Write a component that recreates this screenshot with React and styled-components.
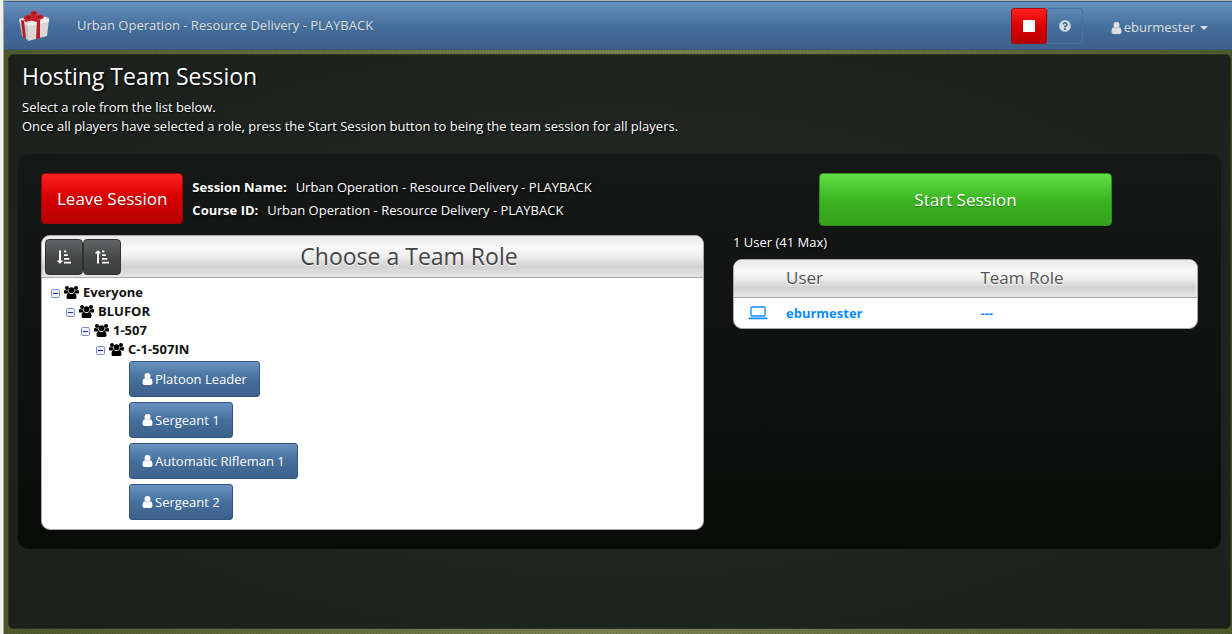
import React from "react";
import styled, { createGlobalStyle, css } from "styled-components";
import { FaQuestionCircle } from "react-icons/fa";

const GlobalStyle = createGlobalStyle`
  *, *::before, *::after {
    box-sizing: border-box;
  }

  html, body, #root {
    height: 100%;
    margin: 0;
  }

  body {
    background: #f1f1f1;
    color: #ffffff;
    font-family: "Open Sans", "Noto Sans", sans-serif;
    font-size: 13px;
    font-weight: 500;
    line-height: 19px;
  }

  button {
    font-family: inherit;
    font-weight: inherit;
    cursor: pointer;
  }
`;

const blueGradient = "linear-gradient(#6892c1 0%, #456f9c 50%, #3e618c 100%)";
const silverGradient =
  "linear-gradient(#e9e9e9 0%, #f9f9f9 30%, #eeeeee 50%, #d2d2d2 75%, #e6e6e6 100%)";

const Page = styled.div`
  display: flex;
  flex-direction: column;
  min-height: 100vh;
`;

const Window = styled.div`
  flex: 1;
  display: flex;
  flex-direction: column;
  margin-left: 3px;
  border-top: 1px solid #b5b5ad;
  border-left: 1px solid #a8a8a0;
  background: repeating-linear-gradient(
      90deg,
      rgba(0, 0, 0, 0.08) 0 1px,
      transparent 1px 3px
    ),
    linear-gradient(90deg, #50592a 0%, #7b8351 50%, #50592a 100%);
`;

const Header = styled.header`
  display: flex;
  align-items: center;
  height: 49px;
  padding: 0 24px 0 14px;
  border-top: 1px solid #36618f;
  border-bottom: 1px solid #365680;
  background: ${blueGradient};
  color: #dddddd;
  text-shadow: 0 1px 1px #3e6790;
`;

const HeaderTitle = styled.div`
  flex: 1;
  margin-left: 27px;
`;

const HeaderButton = styled.button`
  display: flex;
  align-items: center;
  justify-content: center;
  width: 36px;
  height: 36px;
  padding: 0;
  border: 1px solid #4872a0;
  border-radius: 3px;
  background: transparent;
  color: #d5dbe2;

  ${(props) =>
    props.$danger &&
    css`
      border-color: #a80808;
      background: linear-gradient(#ff2020 0%, #d90000 50%, #b80000 100%);
    `}
`;

const StopSquare = styled.span`
  width: 12px;
  height: 12px;
  background: #ffffff;
`;

const UserMenu = styled.button`
  display: flex;
  align-items: center;
  gap: 2px;
  margin-left: 28px;
  padding: 4px 0 0;
  border: none;
  background: none;
  color: #dddddd;
  font-size: 13px;
  line-height: 19px;
`;

const Caret = styled.span`
  margin-left: 3px;
  border: 4px solid transparent;
  border-top-color: #dddddd;
  border-bottom: none;
`;

const Main = styled.main`
  flex: 1;
  margin: 4px 1px 5px 4px;
  padding: 8px 9px 79px;
  border: 1px solid #2f3320;
  border-radius: 5px;
  background: radial-gradient(ellipse at 50% 50%, #252a26 0%, #1b201d 100%);
  text-shadow: 1px 1px 2px #000000;
`;

const Heading = styled.h1`
  margin: 0 0 8px;
  padding-left: 4px;
  font-size: 23px;
  font-weight: 400;
  line-height: 27px;
`;

const Intro = styled.p`
  margin: 0;
  padding-left: 4px;
`;

const Panel = styled.section`
  display: flex;
  gap: 29px;
  margin-top: 18px;
  padding: 19px 23px;
  border-radius: 10px;
  background: linear-gradient(#151816 0%, #0a0c0a 100%);
`;

const RoleColumn = styled.div`
  flex: 663;
  min-width: 0;
`;

const UserColumn = styled.div`
  flex: 465;
  min-width: 0;
`;

const SessionBar = styled.div`
  display: flex;
  gap: 9px;
  margin-bottom: 11px;
`;

const ActionButton = styled.button`
  display: block;
  height: 51px;
  padding: 0 15px;
  border: 1px solid #a00606;
  border-radius: 4px;
  background: linear-gradient(#ff2020 0%, #d40000 50%, #b60000 100%);
  color: #ffffff;
  font-size: 17px;
  font-weight: 400;
  text-shadow: 0 1px 1px rgba(0, 0, 0, 0.3);
  white-space: nowrap;
`;

const StartButton = styled(ActionButton)`
  width: 63%;
  height: 53px;
  margin: 0 auto 7px;
  border-color: #2f8f1b;
  background: linear-gradient(#62de46 0%, #3cb521 50%, #36a01e 100%);
`;

const Details = styled.dl`
  margin: 3px 0 0;
`;

const Detail = styled.div`
  display: flex;
  gap: 9px;
  line-height: 23px;

  dt {
    font-weight: 700;
  }

  dd {
    margin: 0;
  }
`;

const Card = styled.div`
  overflow: hidden;
  border: 1px solid #aaaaaa;
  border-radius: 9px;
  background: #ffffff;
  color: #222222;
  text-shadow: none;
`;

const RoleHeader = styled.div`
  display: flex;
  align-items: center;
  height: 42px;
  padding: 0 3px;
  border-bottom: 1px solid #aaaaaa;
  background: ${silverGradient};
`;

const RoleTitle = styled.h2`
  flex: 1;
  margin: 0;
  padding-right: 3px;
  color: #444444;
  font-size: 23px;
  font-weight: 400;
  text-align: center;
  text-shadow: 0 1px 0 #ffffff;
`;

const SortButton = styled.button`
  display: flex;
  align-items: center;
  justify-content: center;
  width: 38px;
  height: 36px;
  padding: 0;
  border: 1px solid #303232;
  border-radius: 4px;
  background: linear-gradient(#626666 0%, #474949 50%, #3c3e3e 100%);
  color: #ffffff;
`;

const Tree = styled.ul`
  margin: 0;
  padding: 5px 0 4px 9px;
  list-style: none;
`;

const Branch = styled.ul`
  margin: 0;
  padding: 0 0 0 15px;
  list-style: none;
`;

const NodeLabel = styled.div`
  display: flex;
  align-items: center;
  gap: 4px;
  color: #111111;
  font-weight: 700;
  line-height: 19px;
`;

const Toggle = styled.button`
  display: flex;
  padding: 2px 0 0;
  border: none;
  background: none;
`;

const RoleList = styled.ul`
  display: flex;
  flex-direction: column;
  align-items: flex-start;
  gap: 5px;
  margin: 2px 0 5px;
  padding: 0 0 0 33px;
  list-style: none;
`;

const RoleButton = styled.button`
  display: flex;
  align-items: center;
  gap: 2px;
  height: 36px;
  padding: 0 12px;
  border: 1px solid #34577f;
  border-radius: 3px;
  background: ${blueGradient};
  color: #ffffff;
  font-size: 13px;
`;

const UserCount = styled.div`
  margin-bottom: 7px;
`;

const UserTable = styled.table`
  width: 100%;
  border-collapse: collapse;
  table-layout: fixed;

  th {
    height: 37px;
    padding: 0 0 1px;
    border-bottom: 1px solid #aaaaaa;
    color: #555555;
    font-size: 17px;
    font-weight: 400;
    text-align: left;
    text-shadow: 0 1px 0 #ffffff;
  }

  td {
    height: 31px;
    padding: 1px 0 0;
    color: #0a8cff;
    font-weight: 700;
  }

  thead {
    background: ${silverGradient};
  }

  td svg {
    display: block;
    margin-left: 14px;
  }
`;

const IconColumn = styled.col`
  width: 52px;
`;

const NameColumn = styled.col`
  width: 42%;
`;

const PageFooter = styled.footer`
  display: flex;
  height: 2px;
  border-top: 1px solid #c9c9c6;
  background: #f1f1f1;
`;

function GiftLogo() {
  return (
    <svg width="32" height="32" viewBox="0 0 32 32" aria-label="Gift">
      <path d="M1 9 11 13 11 31 4 26Z" fill="#c3c1bf" />
      <path d="M10 12 31 9 29 26 10 31Z" fill="#dad8d7" />
      <path d="M1 9 17 4 31 8 10 13Z" fill="#efeeee" />
      <path d="M1 9 10 12 10 16 2 13Z" fill="#dddbd9" />
      <path d="M10 12 31 8 31 12 10 16Z" fill="#eeeded" />
      <path d="M3 10 6 11 8 29 5 27Z" fill="#b71c22" />
      <path d="M19 11 22 10 22 28 18 29Z" fill="#b71c22" />
      <path d="M5 10 21 5 25 7 8 12Z" fill="#c92027" />
      <path d="M9 6 23 10 19 12 4 8Z" fill="#bc1b22" />
      <path
        d="M15 9C11 10 6 10 6 8 6 5 11 4 14 5 11 3 13 1 16 1 20 1 20 3 18 5 21 4 26 5 26 7 25 10 19 10 15 9Z"
        fill="#cb2028"
      />
      <path d="M8 7 13 6 11 9Z M18 7 23 6 22 8Z" fill="#82151b" />
      <path d="M14 3 18 2 16 5Z" fill="#94171e" />
    </svg>
  );
}

function SortIcon({ up }) {
  return (
    <svg width="14" height="14" viewBox="0 0 14 14" fill="currentColor" aria-hidden="true">
      {up ? (
        <path d="M2 13.500V3.500H.3L0 3 2.900.2 6 3 5.700 3.500H4V13.500Z" />
      ) : (
        <path d="M2 .5V10.500H.3L0 11 2.900 13.800 6 11 5.700 10.500H4V.5Z" />
      )}
      <path d="M7 .5H9.300V2.300H7Z M7 4.200H10.800V6H7Z M7 8H12.300V9.800H7Z M7 11.700H14V13.500H7Z" />
    </svg>
  );
}

function GroupIcon() {
  return (
    <svg width="15" height="13" viewBox="0 0 15 13" fill="#000000" aria-hidden="true">
      <circle cx="3" cy="2" r="2" />
      <circle cx="12" cy="2" r="2" />
      <circle cx="7.5" cy="4.2" r="2.9" />
      <path d="M0 7V5.500C0 4 1 3.800 1.500 4 2.500 4.500 3 4.500 4 4.200 4 5.500 4.400 6 5 6.700 4 6.700 3.400 7 3 7.500H1C.4 7.500 0 7.400 0 7Z" />
      <path d="M15 7V5.500C15 4 14 3.800 13.500 4 12.500 4.500 12 4.500 11 4.200 11 5.500 10.600 6 10 6.700 11 6.700 11.600 7 12 7.500H14C14.600 7.500 15 7.400 15 7Z" />
      <path d="M2.500 11.200C2.500 8.500 3.300 7 5 7 6.700 8.300 8.300 8.300 10 7 11.700 7 12.500 8.500 12.500 11.200 12.500 12.400 11.700 13 10.700 13H4.300C3.300 13 2.500 12.400 2.500 11.200Z" />
    </svg>
  );
}

function PersonIcon() {
  return (
    <svg width="11" height="12" viewBox="0 0 11 12" fill="currentColor" aria-hidden="true">
      <circle cx="5.500" cy="3" r="3" />
      <path d="M.5 9.600C.5 7 1.300 5.300 3 5.300 4.600 6.500 6.400 6.500 8 5.300 9.700 5.300 10.500 7 10.500 9.600 10.500 11.200 9.700 12 8.600 12H2.400C1.300 12 .5 11.200.5 9.600Z" />
    </svg>
  );
}

function MinusIcon() {
  return (
    <svg width="9" height="9" viewBox="0 0 9 9" aria-hidden="true">
      <rect x=".5" y=".5" width="8" height="8" rx="1" fill="#eef1fb" stroke="#7b8fce" />
      <path d="M2 4.500H7" stroke="#2323c8" />
    </svg>
  );
}

function LaptopIcon() {
  return (
    <svg width="20" height="14" viewBox="0 0 20 14" fill="none" aria-hidden="true">
      <rect x="3" y="1" width="14" height="9" rx="1" stroke="#0a8cff" strokeWidth="1.300" />
      <path d="M.5 11.500H19.500V12.300C19.500 13 19 13.300 18 13.300H2C1 13.300.5 13 .5 12.300Z" fill="#0a8cff" />
    </svg>
  );
}

const groups = ["Everyone", "BLUFOR", "1-507", "C-1-507IN"];
const roles = ["Platoon Leader", "Sergeant 1", "Automatic Rifleman 1", "Sergeant 2"];

function TreeNode({ depth }) {
  const isLast = depth === groups.length - 1;

  return (
    <li>
      <NodeLabel>
        <Toggle aria-label={`Collapse ${groups[depth]}`}>
          <MinusIcon />
        </Toggle>
        <GroupIcon />
        {groups[depth]}
      </NodeLabel>
      {isLast ? (
        <RoleList>
          {roles.map((role) => (
            <li key={role}>
              <RoleButton>
                <PersonIcon />
                {role}
              </RoleButton>
            </li>
          ))}
        </RoleList>
      ) : (
        <Branch>
          <TreeNode depth={depth + 1} />
        </Branch>
      )}
    </li>
  );
}

function App() {
  const sessionName = "Urban Operation - Resource Delivery - PLAYBACK";

  return (
    <Page>
      <GlobalStyle />
      <Window>
        <Header>
          <GiftLogo />
          <HeaderTitle>{sessionName}</HeaderTitle>
          <HeaderButton $danger aria-label="Stop">
            <StopSquare />
          </HeaderButton>
          <HeaderButton aria-label="Help">
            <FaQuestionCircle size={12} />
          </HeaderButton>
          <UserMenu>
            <PersonIcon />
            eburmester
            <Caret />
          </UserMenu>
        </Header>

        <Main>
          <Heading>Hosting Team Session</Heading>
          <Intro>Select a role from the list below.</Intro>
          <Intro>
            Once all players have selected a role, press the Start Session button
            to being the team session for all players.
          </Intro>

          <Panel>
            <RoleColumn>
              <SessionBar>
                <ActionButton>Leave Session</ActionButton>
                <Details>
                  <Detail>
                    <dt>Session Name:</dt>
                    <dd>{sessionName}</dd>
                  </Detail>
                  <Detail>
                    <dt>Course ID:</dt>
                    <dd>{sessionName}</dd>
                  </Detail>
                </Details>
              </SessionBar>

              <Card>
                <RoleHeader>
                  <SortButton aria-label="Sort descending">
                    <SortIcon />
                  </SortButton>
                  <SortButton aria-label="Sort ascending">
                    <SortIcon up />
                  </SortButton>
                  <RoleTitle>Choose a Team Role</RoleTitle>
                </RoleHeader>
                <Tree>
                  <TreeNode depth={0} />
                </Tree>
              </Card>
            </RoleColumn>

            <UserColumn>
              <StartButton>Start Session</StartButton>
              <UserCount>1 User (41 Max)</UserCount>
              <Card>
                <UserTable>
                  <colgroup>
                    <IconColumn />
                    <NameColumn />
                    <col />
                  </colgroup>
                  <thead>
                    <tr>
                      <th aria-label="Status" />
                      <th>User</th>
                      <th>Team Role</th>
                    </tr>
                  </thead>
                  <tbody>
                    <tr>
                      <td>
                        <LaptopIcon />
                      </td>
                      <td>eburmester</td>
                      <td>---</td>
                    </tr>
                  </tbody>
                </UserTable>
              </Card>
            </UserColumn>
          </Panel>
        </Main>
      </Window>
      <PageFooter />
    </Page>
  );
}

export default App;
